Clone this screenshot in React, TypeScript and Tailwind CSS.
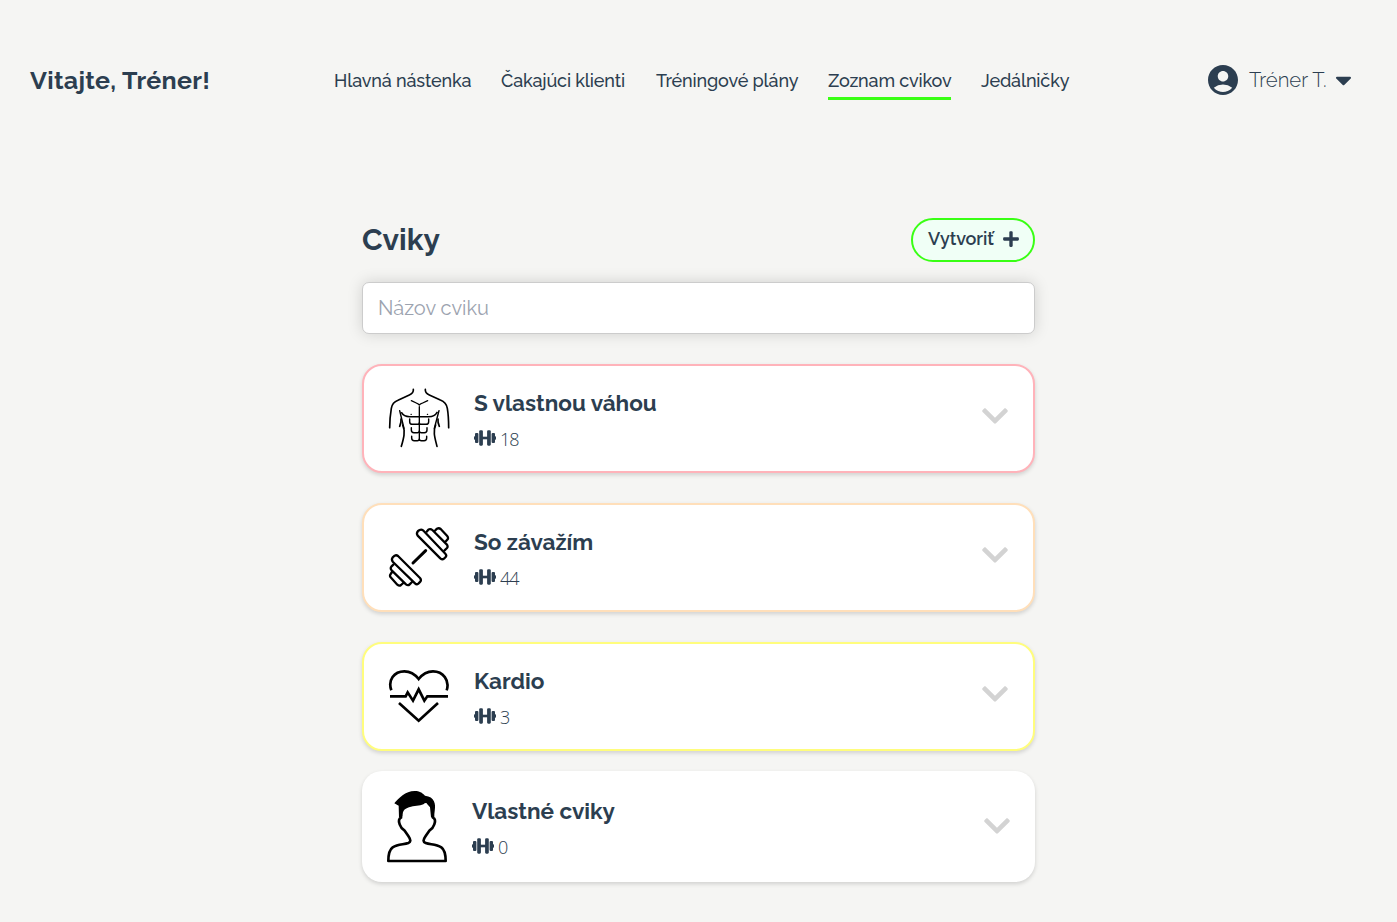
import { FaChevronDown, FaPlus, FaCaretDown } from "react-icons/fa";
import { MdAccountCircle } from "react-icons/md";
import type { ReactNode } from "react";

const navItems = [
  { label: "Hlavná nástenka", style: "w-[137px]" },
  { label: "Čakajúci klienti", style: "w-[125px]" },
  { label: "Tréningové plány", style: "w-[142px]" },
  { label: "Zoznam cvikov", style: "w-[123px]", active: true },
  { label: "Jedálničky", style: "w-[89px]" },
];

function TorsoIcon() {
  return (
    <svg viewBox="54 54 186 180" className="h-[60px] w-[62px]" fill="none" stroke="#000" strokeWidth="5" strokeLinecap="round" strokeLinejoin="round">
      <path d="M130 58c1 9-3 13-12 17L84 91c-13 5-18 12-20 24-3 18-5 36-5 58M166 58c-1 9 3 13 12 17l33 15c13 5 19 13 21 25 3 18 4 36 4 58" />
      <path d="M124 92l15 7M173 92l-15 7M141 100q4 1 7 5q3-4 7-5M148 110v101" strokeWidth="4" />
      <path d="M89 122l13 53M95 128c5 10 13 12 24 12h57c12 0 20-3 25-13M207 122l-14 53" strokeWidth="4.4" />
      <path d="M93 147c1 8 0 13-4 22M204 147c-1 8 0 13 4 22M98 165c9 19 3 40-4 64M197 165c-9 19-2 40 4 64" />
      <path d="M119 147v8q0 8 8 8h15q6 0 6-5q0 5 6 5h14q8 0 8-8v-8M124 173v7q0 8 8 8h10q6 0 6-5q0 5 6 5h9q8 0 8-8v-7M125 199v5q0 8 8 8h9q6 0 6-5q0 5 6 5h8q8 0 8-8v-5" strokeWidth="4.3" />
      <path d="M123 133h1M172 133h1" strokeWidth="3.5" />
    </svg>
  );
}

function WeightIcon() {
  return (
    <svg viewBox="54 48 186 186" className="size-[62px]" fill="none" stroke="#000" strokeWidth="6.8" strokeLinecap="round" strokeLinejoin="round">
      <path d="M129 159l38-37" strokeWidth="9" />
      <path d="M144 63l5-3q5-3 10 1l67 70q5 5 1 10l-5 5q-5 4-11-1L143 77q-5-7 1-14z" />
      <path d="M170 65l5-6q6-4 12 1l43 43q5 6 1 11l-8 8M194 63l7-7q6-3 11 1l19 20q5 6 2 11l-8 9" />
      <path d="M68 142l6-5q5-3 10 1l66 66q5 6 1 11l-6 6q-5 4-10-1L69 156q-6-7-1-14z" />
      <path d="M70 164l-6 6q-4 5 1 11l43 42q6 5 11 0l7-7M66 186l-4 6q-4 5 0 10l20 22q6 5 11 1l9-8" />
    </svg>
  );
}

function HeartIcon() {
  return (
    <svg viewBox="54 48 186 180" className="h-[60px] w-[62px]" fill="none" stroke="#000" strokeWidth="8">
      <path d="M64 121c-11-30 8-57 39-57 18 0 32 9 43 23 11-14 25-23 43-23 30 0 51 27 41 57" />
      <path d="M60 139h47l6-12 16 25 17-34 17 34 9-13h62" />
      <path d="M87 159l59 53 58-53" />
    </svg>
  );
}

function PersonIcon() {
  return (
    <svg viewBox="93 75 186 219" className="h-[73px] w-[62px]" fill="none" stroke="#000" strokeWidth="8" strokeLinejoin="round">
      <path d="M138 128v30c-8 4-7 12-4 20 3 9 6 13 14 18l12 17c9 13 7 18 0 21-14 5-31 3-47 13-10 7-13 19-13 41h172c0-22-3-34-13-41-16-10-33-8-47-13-8-3-9-8 0-21l12-17c8-5 11-9 14-18 3-8 4-16-4-20v-36" />
      <path d="M118 115c13-15 33-37 61-37 15 0 22 5 31 14 29 3 33 26 29 44l-4 23-7-2-3-30-8-9q-2-6-8-3c-9 9-26 6-41 10-17 4-25 9-26 29l-10 4-1-36z" fill="#000" stroke="none" />
    </svg>
  );
}

function CountIcon() {
  return (
    <svg viewBox="0 0 22 16" className="h-4 w-[22px]" fill="#2c3e50">
      <rect x="0" y="6.2" width="2" height="3.6" rx=".7" />
      <rect x="1" y="3" width="3.4" height="10" rx="1" />
      <rect x="5.2" y=".3" width="3.7" height="15.4" rx="1.1" />
      <rect x="8" y="6.7" width="6" height="2.6" />
      <rect x="13.1" y=".3" width="3.7" height="15.4" rx="1.1" />
      <rect x="17.6" y="3" width="3.4" height="10" rx="1" />
      <rect x="20" y="6.2" width="2" height="3.6" rx=".7" />
    </svg>
  );
}

function Category({ icon, title, count, frame, chevron = "mt-[13px]" }: { icon: ReactNode; title: string; count: number; frame: string; chevron?: string }) {
  return (
    <section className={`flex rounded-[20px] bg-white shadow-[0_2px_4px_rgba(0,0,0,0.15)] ${frame}`}>
      <div className="w-[85px] shrink-0">{icon}</div>
      <div className="flex-1">
        <h2 className="text-[22.5px] font-bold leading-[30px] whitespace-nowrap">{title}</h2>
        <div className="mt-[9px] flex h-6 items-center gap-1">
          <div className="-mt-[3px]"><CountIcon /></div>
          <span className="font-['Open_Sans',sans-serif] text-[18px] leading-6 font-light tracking-[-0.9px]">{count}</span>
        </div>
      </div>
      <FaChevronDown className={`size-[30px] text-[#d3d3d3] ${chevron}`} />
    </section>
  );
}

export default function App() {
  return (
    <div className="min-h-[922px] bg-[#f5f5f3] font-[Raleway,Lato,sans-serif] text-[#2c3e50]">
      <header className="flex h-[160px] items-center pl-[30px] pr-[45px]">
        <div className="w-[304px] pt-[2px] text-[25px] font-bold tracking-[0.3px] whitespace-nowrap">Vitajte, Tréner!</div>
        <nav className="flex gap-[30px]">
          {navItems.map((item) => (
            <a key={item.label} className={`h-10 border-b-3 pt-[7px] text-[18px] leading-[27px] font-medium tracking-[-0.15px] whitespace-nowrap ${item.style} ${item.active ? "border-[#39ff14]" : "border-transparent"}`}>
              {item.label}
            </a>
          ))}
        </nav>
        <button className="ml-auto flex items-center text-[20.3px] font-light">
          <MdAccountCircle className="size-9" />
          <span className="ml-[8px] w-[78px] text-left whitespace-nowrap">Tréner T.</span>
          <FaCaretDown className="ml-[8px] h-[26px] w-[17px]" />
        </button>
      </header>
      <main className="mx-auto w-[673px] pt-[58px]">
        <div className="flex h-11 items-center justify-between">
          <h1 className="pb-[2px] text-[30px] font-bold">Cviky</h1>
          <button className="flex h-11 w-[124px] items-center justify-between rounded-full border-2 border-[#39ff14] bg-[#f0fff6] pr-[13px] pb-[3px] pl-[15px] text-[18px] font-semibold">
            <span className="tracking-[-0.1px] whitespace-nowrap">Vytvoriť</span>
            <FaPlus className="size-[18px]" />
          </button>
        </div>
        <input placeholder="Názov cviku" className="mt-5 block h-[52px] w-full rounded-[7px] border border-[#ccc] bg-white px-[15px] text-[20px] font-normal shadow-[0_0_15px_rgba(0,0,0,0.15)] placeholder:text-[#9ca3af]" />
        <div className="mt-[30px] flex flex-col gap-[30px]">
          <Category icon={<div className="-ml-px"><TorsoIcon /></div>} title="S vlastnou váhou" count={18} frame="h-[109px] border-2 border-[#ffb3ba] py-[22px] pr-[23px] pl-[25px]" />
          <Category icon={<div className="-mt-px -ml-px"><WeightIcon /></div>} title="So závažím" count={44} frame="h-[109px] border-2 border-[#ffdfba] py-[22px] pr-[23px] pl-[25px]" />
          <Category icon={<div className="-ml-px"><HeartIcon /></div>} title="Kardio" count={3} frame="h-[109px] border-2 border-[#fffd7d] py-[22px] pr-[23px] pl-[25px]" />
        </div>
        <div className="mt-5">
          <Category icon={<div className="-mt-[6px] -ml-px"><PersonIcon /></div>} title="Vlastné cviky" count={0} chevron="mt-[15px]" frame="h-[111px] pt-[25px] pr-[23px] pl-[25px]" />
        </div>
      </main>
    </div>
  );
}
